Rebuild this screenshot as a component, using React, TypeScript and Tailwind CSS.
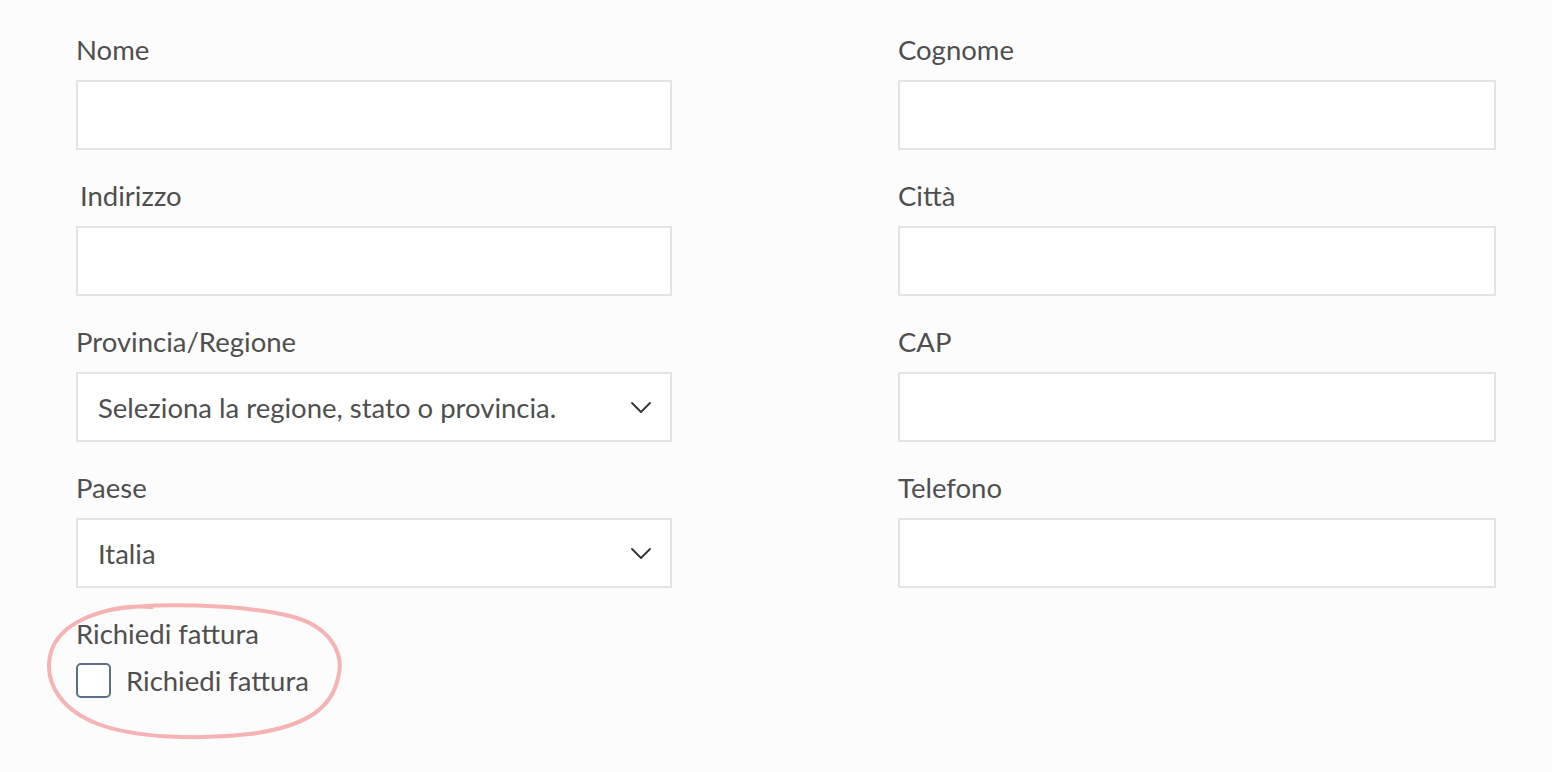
import React from 'react'

const labelCls = 'h-[30px] leading-[30px] text-[27.5px] text-[#4f4f4f] mb-[15px]'
const boxCls = 'h-[70px] w-full border-2 border-[#e4e4e4] bg-white'

function Field({ label, indent = false }: { label: string; indent?: boolean }) {
  return (
    <div className="flex flex-col">
      <label className={`${labelCls} ${indent ? 'pl-[4px]' : ''}`}>{label}</label>
      <input className={`${boxCls} px-5 text-[27.5px] outline-none`} />
    </div>
  )
}

function SelectField({ label, value }: { label: string; value: string }) {
  return (
    <div className="flex flex-col">
      <label className={labelCls}>{label}</label>
      <div className={`${boxCls} flex items-center justify-between pl-[20px] pr-[19px]`}>
        <span className="text-[27.5px] leading-[35px] text-[#4f4f4f]">{value}</span>
        <svg width="20" height="11" viewBox="0 0 20 11" fill="none">
          <path d="M1 1 L10 10 L19 1" stroke="#333" strokeWidth="1.8" strokeLinecap="round" strokeLinejoin="round" />
        </svg>
      </div>
    </div>
  )
}

export default function App() {
  return (
    <div
      className="relative min-h-[772px] bg-[#fcfcfc] pt-[35px] pl-[76px]"
      style={{ fontFamily: 'Lato, "Noto Sans", sans-serif' }}
    >
      <div className="grid grid-cols-[596px_598px] gap-x-[226px] gap-y-[31px]">
        <Field label="Nome" />
        <Field label="Cognome" />
        <Field label="Indirizzo" indent />
        <Field label="Città" />
        <SelectField label="Provincia/Regione" value="Seleziona la regione, stato o provincia." />
        <Field label="CAP" />
        <SelectField label="Paese" value="Italia" />
        <Field label="Telefono" />
      </div>

      {/* Richiedi fattura */}
      <div className="mt-[31px] flex flex-col">
        <div className="h-[30px] leading-[30px] text-[27.5px] text-[#4f4f4f]">Richiedi fattura</div>
        <label className="mt-[14px] flex h-[35px] items-center gap-[15px]">
          <span className="h-[35px] w-[35px] rounded-[5px] border-2 border-[#5b7189] bg-white" />
          <span className="text-[27.5px] leading-[35px] text-[#4f4f4f]">Richiedi fattura</span>
        </label>
      </div>

      {/* annotation circle */}
      <svg className="pointer-events-none absolute left-[40px] top-[598px]" width="310" height="146" viewBox="0 0 310 146" fill="none">
        <path
          d="M70 12 C110 4, 200 6, 250 18 C290 28, 305 55, 298 80 C292 108, 270 128, 210 136 C160 142, 95 140, 58 126 C22 112, 8 88, 9 66 C10 42, 28 22, 70 12 C85 8, 100 8, 112 9"
          stroke="#f5b3b3"
          strokeWidth="4"
          strokeLinecap="round"
          strokeLinejoin="round"
        />
      </svg>
    </div>
  )
}
